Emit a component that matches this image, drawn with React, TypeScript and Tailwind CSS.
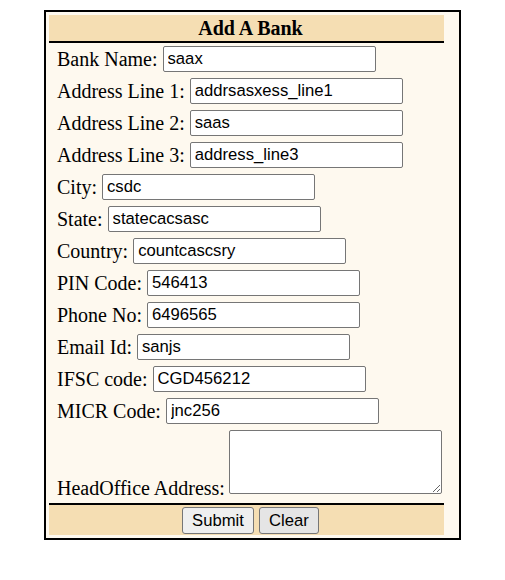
import React from 'react';

const fields: { label: string; value: string }[] = [
  { label: 'Bank Name:', value: 'saax' },
  { label: 'Address Line 1:', value: 'addrsasxess_line1' },
  { label: 'Address Line 2:', value: 'saas' },
  { label: 'Address Line 3:', value: 'address_line3' },
  { label: 'City:', value: 'csdc' },
  { label: 'State:', value: 'statecacsasc' },
  { label: 'Country:', value: 'countcascsry' },
  { label: 'PIN Code:', value: '546413' },
  { label: 'Phone No:', value: '6496565' },
  { label: 'Email Id:', value: 'sanjs' },
  { label: 'IFSC code:', value: 'CGD456212' },
  { label: 'MICR Code:', value: 'jnc256' },
];

const inputCls =
  "w-[213px] h-[26px] border border-[#767676] rounded-[2px] bg-white px-[4px] text-[16.67px] text-black font-['Liberation_Sans',Arial,sans-serif] outline-none";

export default function App() {
  return (
    <div className="min-h-[580px] bg-white pt-[10px] font-['Liberation_Serif','Times_New_Roman',serif] text-[20px] text-black">
      <div className="mx-auto w-[417px] border-2 border-black bg-[#fef9ef] pt-[3px] pb-[3px] pl-[3px]">
        <div className="w-[395px]">
          {/* Header */}
          <div className="h-[28px] bg-[#f5deb3] border-b-2 border-black flex items-center justify-center pl-[8px] font-bold leading-none">
            Add A Bank
          </div>

          {/* Rows */}
          <div className="flex flex-col gap-[6px] pt-[3px] pl-[8px]">
            {fields.map((f) => (
              <div key={f.label} className="h-[26px] flex items-center gap-[5px]">
                <span className="leading-[23px] whitespace-nowrap">{f.label}</span>
                <input type="text" defaultValue={f.value} className={inputCls} />
              </div>
            ))}
            <div className="flex items-end gap-[4px] pb-[9px]">
              <span className="leading-none whitespace-nowrap translate-y-[4px]">HeadOffice Address:</span>
              <textarea className="w-[213px] h-[64px] border border-[#767676] rounded-[2px] bg-white outline-none" />
            </div>
          </div>

          {/* Footer */}
          <div className="h-[32px] bg-[#f5deb3] border-t-2 border-black flex items-center justify-center gap-[5px] pl-[8px] font-['Liberation_Sans',Arial,sans-serif] text-[16.67px]">
            <button className="w-[72px] h-[27px] bg-[#efefef] border border-[#767676] rounded-[3px] text-black">
              Submit
            </button>
            <button className="w-[60px] h-[27px] bg-[#e5e5e5] border border-[#767676] rounded-[3px] text-black">
              Clear
            </button>
          </div>
        </div>
      </div>
    </div>
  );
}
